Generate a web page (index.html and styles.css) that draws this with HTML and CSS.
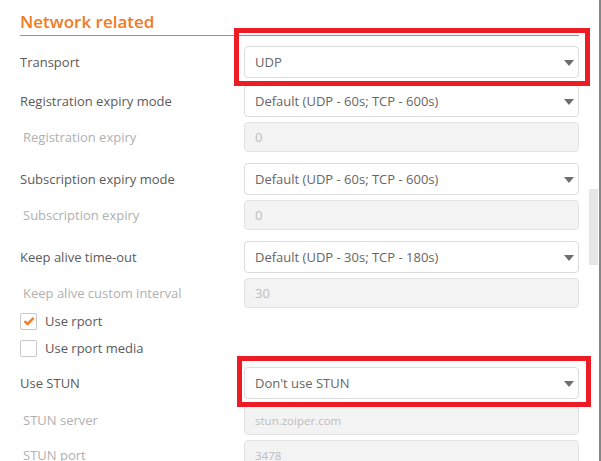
FILE: index.html
```html
<!DOCTYPE html>
<html>
<head>
  <meta charset="UTF-8" />
  <title>Network related</title>
  <link rel="stylesheet" href="styles.css">
</head>
<body>
  <div class="panel">
    <h2 class="section-title">Network related</h2>

    <div class="row row-first">
      <div class="label">Transport</div>
      <div class="select">UDP<span class="caret"></span></div>
    </div>

    <div class="row row-select-next">
      <div class="label">Registration expiry mode</div>
      <div class="select">Default (UDP - 60s; TCP - 600s)<span class="caret"></span></div>
    </div>

    <div class="row row-input">
      <div class="label disabled">Registration expiry</div>
      <div class="input">0</div>
    </div>

    <div class="row row-select">
      <div class="label">Subscription expiry mode</div>
      <div class="select">Default (UDP - 60s; TCP - 600s)<span class="caret"></span></div>
    </div>

    <div class="row row-input">
      <div class="label disabled">Subscription expiry</div>
      <div class="input">0</div>
    </div>

    <div class="row row-select">
      <div class="label">Keep alive time-out</div>
      <div class="select">Default (UDP - 30s; TCP - 180s)<span class="caret"></span></div>
    </div>

    <div class="row row-input">
      <div class="label disabled">Keep alive custom interval</div>
      <div class="input">30</div>
    </div>

    <div class="check-row check-first">
      <span class="checkbox checked">
        <svg width="12" height="10" viewBox="0 0 12 10"><path d="M1.5 5.2 L4.6 8 L10.5 1.8" fill="none" stroke="#f37a21" stroke-width="2.4"/></svg>
      </span>
      <span class="check-label">Use rport</span>
    </div>

    <div class="check-row">
      <span class="checkbox"></span>
      <span class="check-label">Use rport media</span>
    </div>

    <div class="row row-select">
      <div class="label">Use STUN</div>
      <div class="select">Don't use STUN<span class="caret"></span></div>
    </div>

    <div class="row row-input-stun">
      <div class="label disabled">STUN server</div>
      <div class="input small">stun.zoiper.com</div>
    </div>

    <div class="row row-input">
      <div class="label disabled">STUN port</div>
      <div class="input small">3478</div>
    </div>

    <div class="highlight hl-transport"></div>
    <div class="highlight hl-stun"></div>
    <div class="scroll-thumb"></div>
  </div>
</body>
</html>
```

FILE: styles.css
```css
html, body {
  margin: 0;
  background: #fff;
  overflow: hidden;
}
.panel {
  position: relative;
  width: 601px;
  height: 461px;
  box-sizing: border-box;
  padding: 0 20px 0 20px;
  border-right: 2px solid #858585;
  font-family: "Open Sans", "Noto Sans", sans-serif;
  font-size: 13px;
  color: #5a5a5a;
}
.section-title {
  margin: 0;
  padding-top: 11px;
  height: 24px;
  font-size: 17px;
  font-weight: 600;
  color: #f37a21;
  border-bottom: 1px solid #f37a21;
  line-height: 22px;
}
.row {
  display: flex;
  align-items: center;
}
.row-first { margin-top: 10px; }
.row-select-next { margin-top: 7px; }
.row-select { margin-top: 11px; }
.row-input { margin-top: 5px; }
.row-input-stun { margin-top: 6px; }
.label {
  width: 224px;
  flex: none;
}
.label.disabled {
  color: #b0b0b0;
  padding-left: 3px;
  width: 221px;
}
.select, .input {
  position: relative;
  flex: 1;
  box-sizing: border-box;
  border: 1px solid #dcdcdc;
  border-radius: 4px;
  padding-left: 10px;
  display: flex;
  align-items: center;
}
.select {
  height: 32px;
  background: #fff;
  color: #666;
}
.input {
  height: 30px;
  background: #f3f3f3;
  border-color: #e3e3e3;
  color: #bdbdbd;
}
.input.small {
  font-size: 11.5px;
}
.caret {
  position: absolute;
  right: 4px;
  top: 13px;
  width: 0;
  height: 0;
  border-left: 5.5px solid transparent;
  border-right: 5.5px solid transparent;
  border-top: 6px solid #6e6e6e;
}
.check-row {
  display: flex;
  align-items: center;
  height: 16px;
  margin-top: 11px;
}
.check-row.check-first { margin-top: 5px; }
.check-row + .check-row { margin-top: 11px; }
.checkbox {
  width: 15px;
  height: 15px;
  border: 1px solid #c8c8c8;
  border-radius: 2px;
  background: #fff;
  display: flex;
  align-items: center;
  justify-content: center;
  margin-right: 8px;
}
.check-label {
  color: #5a5a5a;
}
.highlight {
  position: absolute;
  border: 5px solid #ed1c24;
}
.hl-transport {
  left: 234px;
  top: 28px;
  width: 346px;
  height: 48px;
}
.hl-stun {
  left: 237px;
  top: 356px;
  width: 344px;
  height: 41px;
}
.scroll-thumb {
  position: absolute;
  right: 1px;
  top: 189px;
  width: 9px;
  height: 76px;
  background: #e6e6e6;
}
```
